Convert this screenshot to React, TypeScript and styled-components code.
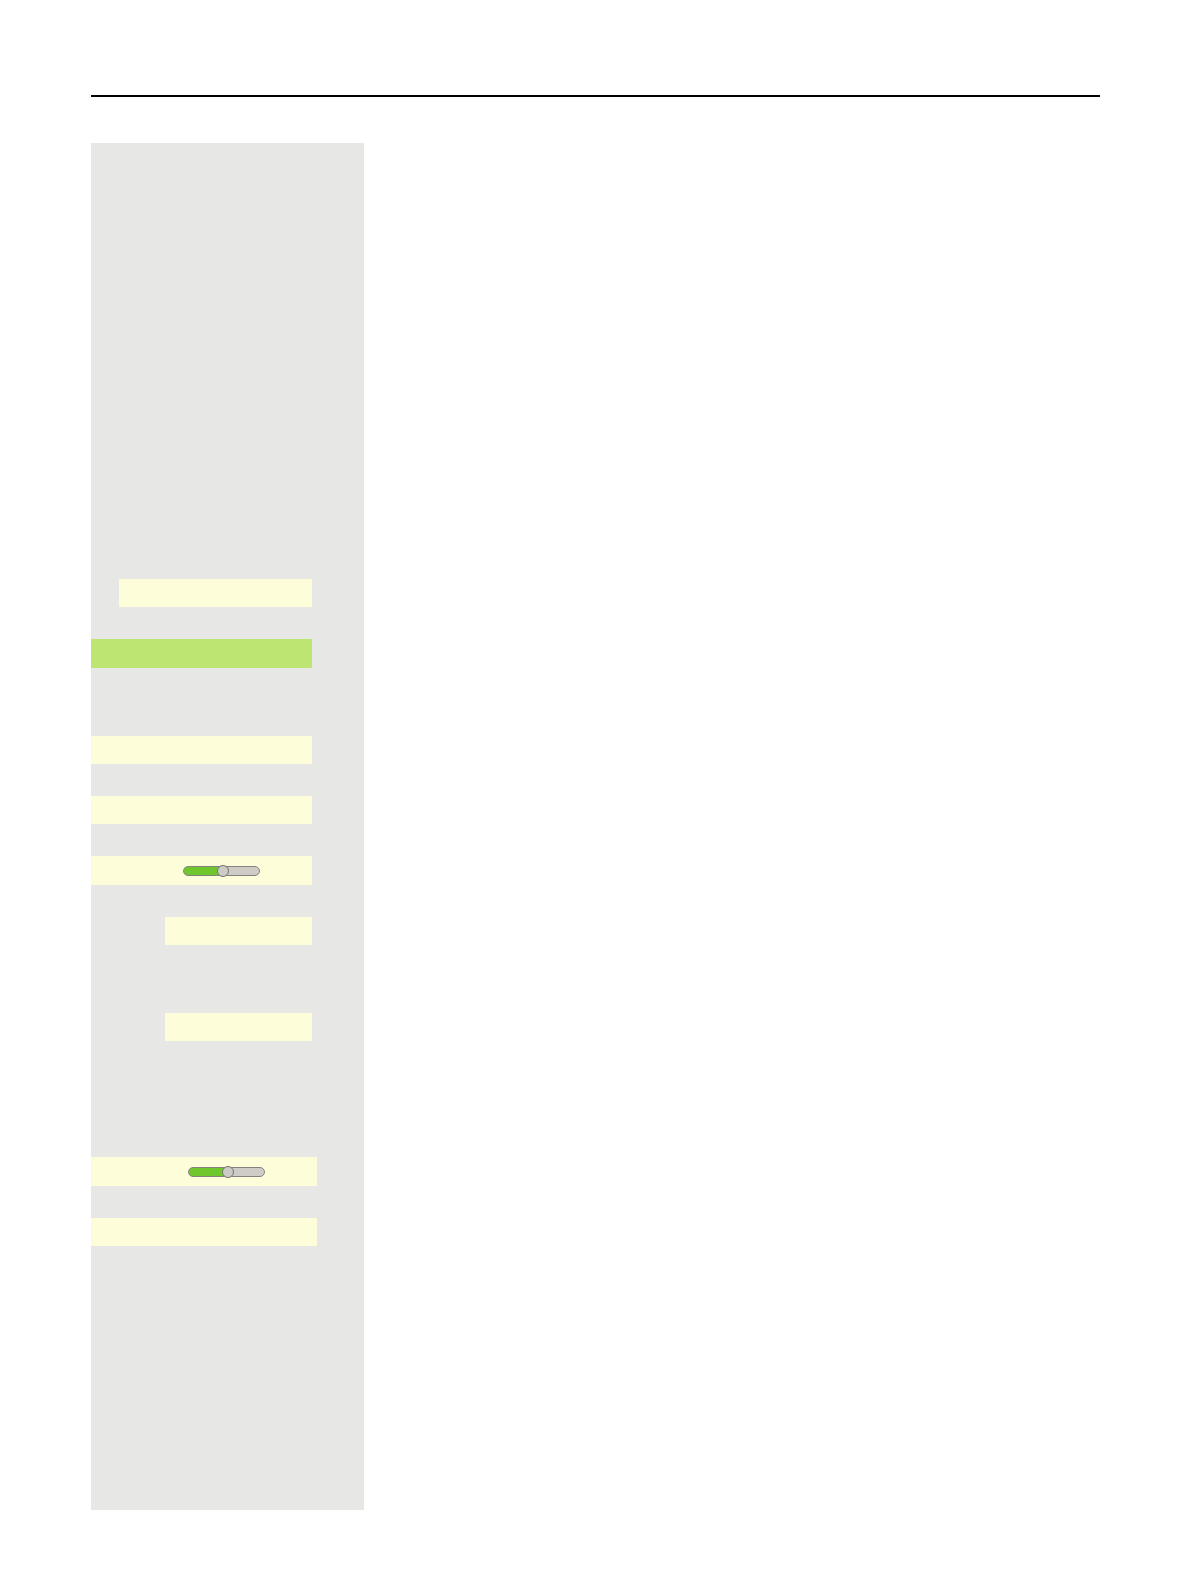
import React, { useState } from "react";
import styled, { createGlobalStyle } from "styled-components";

const GlobalStyle = createGlobalStyle`
  *, *::before, *::after { box-sizing: border-box; }
  body {
    margin: 0;
    background: #ffffff;
    font-family: "Liberation Sans", Arial, sans-serif;
  }
`;

const Page = styled.div`
  display: flex;
  flex-direction: column;
  gap: 46px;
  padding: 95px 90px 72px 91px;
`;

const Header = styled.header`
  height: 2px;
  background: #000000;
`;

const Columns = styled.div`
  display: flex;
`;

const Sidebar = styled.aside`
  display: flex;
  flex-direction: column;
  flex: 0 0 273px;
  gap: 68px;
  padding: 436px 0 264px;
  background: #e7e7e6;
`;

const Content = styled.main`
  flex: 1;
  min-width: 0;
`;

const Group = styled.ul<{ $inset: number; $spaced?: boolean }>`
  display: flex;
  flex-direction: column;
  gap: 32px;
  margin: ${(p) => (p.$spaced ? "48px" : "0")} 0 0;
  padding: 0 ${(p) => p.$inset}px 0 0;
  list-style: none;
`;

const Bar = styled.li<{ $indent?: number; $selected?: boolean; $tall?: boolean }>`
  display: flex;
  align-items: center;
  justify-content: flex-end;
  height: ${(p) => (p.$tall ? 29 : 28)}px;
  margin-left: ${(p) => p.$indent ?? 0}px;
  padding-right: 52px;
  background: ${(p) => (p.$selected ? "#bce572" : "#fdfdd9")};
`;

const Range = styled.input.attrs({ type: "range" })<{ $fill: number }>`
  appearance: none;
  width: 77px;
  height: 12px;
  margin: 0;
  background: transparent;

  &::-webkit-slider-runnable-track {
    height: 10px;
    border: 1px solid #85817b;
    border-radius: 5px;
    background: linear-gradient(
      to right,
      #70c62d ${(p) => p.$fill}%,
      #cfccc8 ${(p) => p.$fill}%
    );
  }

  &::-webkit-slider-thumb {
    appearance: none;
    width: 12px;
    height: 12px;
    margin-top: -2px;
    border: 1px solid #77746f;
    border-radius: 50%;
    background: #cdcbc8;
  }
`;

function Slider({ label }: { label: string }) {
  const [value, setValue] = useState(52);
  return (
    <Range
      aria-label={label}
      min={0}
      max={100}
      value={value}
      $fill={value}
      onChange={(event) => setValue(Number(event.target.value))}
    />
  );
}

export default function App() {
  return (
    <>
      <GlobalStyle />
      <Page>
        <Header />
        <Columns>
          <Sidebar>
            <Group $inset={52}>
              <Bar $indent={28} />
              <Bar $selected $tall />
            </Group>
            <Group $inset={52}>
              <Bar />
              <Bar />
              <Bar $tall>
                <Slider label="Level" />
              </Bar>
              <Bar $indent={74} />
            </Group>
            <Group $inset={52}>
              <Bar $indent={74} />
            </Group>
            <Group $inset={47} $spaced>
              <Bar $tall>
                <Slider label="Second level" />
              </Bar>
              <Bar />
            </Group>
          </Sidebar>
          <Content />
        </Columns>
      </Page>
    </>
  );
}
